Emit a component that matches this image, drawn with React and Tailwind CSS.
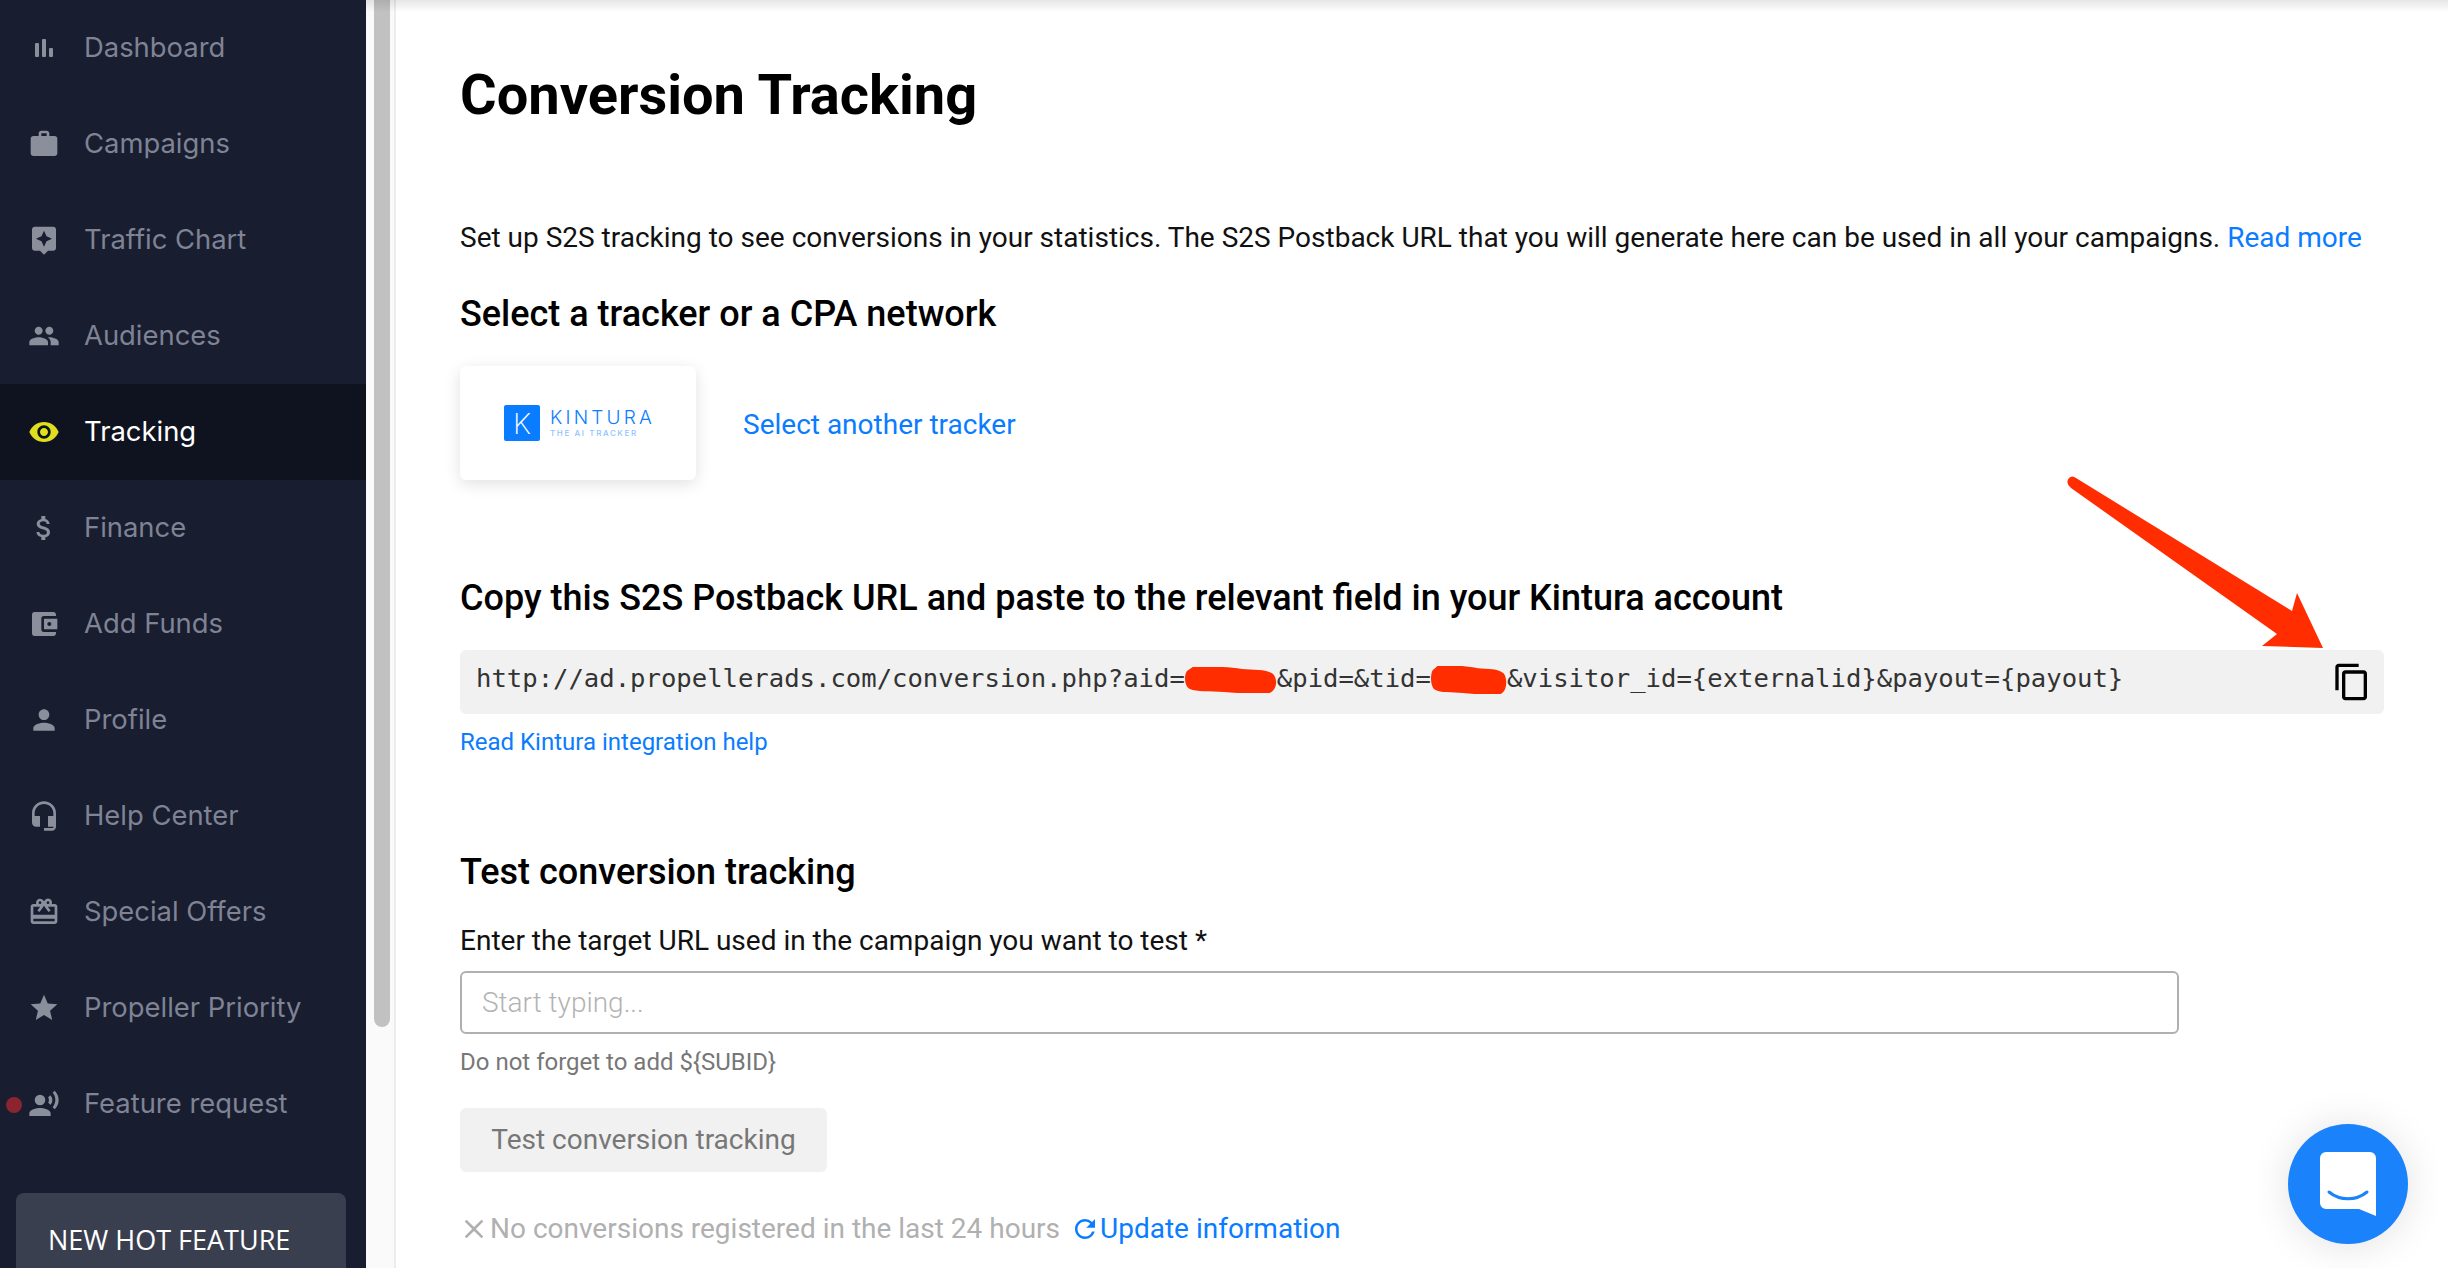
import React from "react";
import {
  MdWork,
  MdAssistant,
  MdPeople,
  MdVisibility,
  MdAttachMoney,
  MdAccountBalanceWallet,
  MdPerson,
  MdHeadsetMic,
  MdOutlineRedeem,
  MdStar,
  MdRecordVoiceOver,
  MdContentCopy,
  MdClose,
  MdRefresh,
} from "react-icons/md";

function BarsIcon({ className }) {
  return (
    <svg className={className} viewBox="0 0 32 32" fill="currentColor">
      <rect x="7" y="11" width="4" height="14" rx="1" />
      <rect x="14" y="7" width="4" height="18" rx="1" />
      <rect x="21" y="16" width="4" height="9" rx="1" />
    </svg>
  );
}

const navItems = [
  { label: "Dashboard", icon: BarsIcon },
  { label: "Campaigns", icon: MdWork },
  { label: "Traffic Chart", icon: MdAssistant },
  { label: "Audiences", icon: MdPeople },
  { label: "Tracking", icon: MdVisibility, active: true },
  { label: "Finance", icon: MdAttachMoney },
  { label: "Add Funds", icon: MdAccountBalanceWallet },
  { label: "Profile", icon: MdPerson },
  { label: "Help Center", icon: MdHeadsetMic },
  { label: "Special Offers", icon: MdOutlineRedeem },
  { label: "Propeller Priority", icon: MdStar },
  { label: "Feature request", icon: MdRecordVoiceOver, dot: true },
];

function NavItem({ label, icon: Icon, active, dot }) {
  return (
    <div
      className={`relative flex h-[96px] shrink-0 items-center pl-[84px] text-[27.4px] ${
        active ? "bg-[#0f131f] text-white" : "text-[#7f8393]"
      }`}
    >
      {dot && (
        <span className="absolute left-[6px] top-[41px] h-[16px] w-[16px] rounded-full bg-[#8c2430]" />
      )}
      <Icon
        className={`absolute left-[28px] top-[32px] h-[32px] w-[32px] ${
          active ? "text-[#dfdf1f]" : "text-[#8b8e9b]"
        }`}
      />
      {label}
    </div>
  );
}

function Sidebar() {
  return (
    <aside className="flex h-full w-[366px] shrink-0 flex-col bg-[#181d30] font-['Inter',sans-serif]">
      {navItems.map((item) => (
        <NavItem key={item.label} {...item} />
      ))}
      <div className="ml-[16px] mr-[20px] mt-[41px] h-[100px] shrink-0 rounded-t-[8px] bg-[#3a3f50] pl-[32px] pt-[29px] font-['Open_Sans',sans-serif] text-[27px] font-medium leading-[36px] text-white">
        NEW HOT FEATURE
      </div>
    </aside>
  );
}

function Scrollbar() {
  return (
    <div className="h-full w-[30px] shrink-0 border-r-2 border-[#ececec] bg-[#fafafa] pl-[8px]">
      <div className="h-[1027px] w-[16px] rounded-b-[8px] bg-[#c1c1c1]" />
    </div>
  );
}

function KinturaLogo() {
  return (
    <div className="flex h-[114px] w-[236px] items-center gap-[10px] rounded-[6px] bg-white pl-[44px] shadow-[0_4px_16px_rgba(0,0,0,0.12)]">
      <div className="flex h-[36px] w-[36px] items-center justify-center rounded-[2px] bg-[#0a7cff] font-['Inter',sans-serif] text-[29px] font-extralight leading-none text-white">
        K
      </div>
      <div className="font-['Inter',sans-serif]">
        <div className="text-[19px] font-light leading-[20px] tracking-[3.2px] text-[#0a7cff]">
          KINTURA
        </div>
        <div className="text-[8px] font-medium leading-[10px] tracking-[1.6px] text-[#8fc3ff]">
          THE AI TRACKER
        </div>
      </div>
    </div>
  );
}

function RedArrow() {
  return (
    <svg
      className="pointer-events-none absolute left-0 top-0"
      width="2448"
      height="1268"
      viewBox="0 0 2448 1268"
    >
      <path
        d="M2076 478 L2292 611 L2297 593 L2323 648 L2262 646 L2277 634 L2071 488 Q2065 483 2069 478 Q2072 475 2076 478 Z"
        fill="#ff2d00"
      />
    </svg>
  );
}

// hand-drawn redaction scribble over the ids in the url
function Scribble({ width, height }) {
  return (
    <svg
      className="inline-block align-middle"
      width={width}
      height={height}
      viewBox="0 0 94 26"
      preserveAspectRatio="none"
    >
      <path
        d="M8 0C28 -1 45 0 58 2C70 3 84 2 90 7C95 12 94 24 86 26C70 27 50 26 40 25C25 24 12 25 5 22C-1 19 -1 8 2 4Z"
        fill="#ff2d00"
      />
    </svg>
  );
}

function Launcher() {
  return (
    <div className="absolute left-[2288px] top-[1124px] flex h-[120px] w-[120px] items-center justify-center rounded-full bg-[#1a82fb] shadow-[0_2px_40px_rgba(0,0,0,0.12)]">
      <svg width="56" height="64" viewBox="0 0 56 64">
        <path
          d="M6 0H50A6 6 0 0 1 56 6V64L39 57H6A6 6 0 0 1 0 51V6A6 6 0 0 1 6 0Z"
          fill="#fff"
        />
        <path
          d="M9 40C20 49 36 49 47 40"
          fill="none"
          stroke="#1a82fb"
          strokeWidth="3"
          strokeLinecap="round"
        />
      </svg>
    </div>
  );
}

export default function App() {
  return (
    <div className="relative flex h-[1268px] w-[2448px] overflow-hidden bg-white font-['Roboto',sans-serif]">
      <Sidebar />
      <Scrollbar />

      <main className="min-w-0 flex-1 px-[64px]">
        <h1 className="mt-[63px] text-[56px] font-bold leading-[64px] text-black">
          Conversion Tracking
        </h1>

        <p className="mt-[95px] whitespace-nowrap text-[28px] leading-[32px] text-[#111]">
          Set up S2S tracking to see conversions in your statistics. The S2S
          Postback URL that you will generate here can be used in all your
          campaigns. <span className="text-[#0a7cff]">Read more</span>
        </p>

        <h2 className="mt-[38px] text-[36px] font-medium leading-[44px] text-black">
          Select a tracker or a CPA network
        </h2>

        <div className="mt-[30px] flex items-center gap-[47px]">
          <KinturaLogo />
          <span className="pt-[4px] text-[28px] text-[#0a7cff]">
            Select another tracker
          </span>
        </div>

        <h2 className="mt-[96px] text-[36px] font-medium leading-[44px] text-black">
          Copy this S2S Postback URL and paste to the relevant field in your
          Kintura account
        </h2>

        <div className="mt-[30px] flex h-[64px] items-center justify-between rounded-[6px] bg-[#f1f1f1] pl-[16px] pr-[12px]">
          <span className="whitespace-nowrap pb-[7px] font-['DejaVu_Sans_Mono',monospace] text-[25.6px] text-[#333]">
            http://ad.propellerads.com/conversion.php?aid=
            <Scribble width={92} height={26} />
            &amp;pid=&amp;tid=
            <Scribble width={76} height={28} />
            &amp;visitor_id={"{externalid}"}&amp;payout={"{payout}"}
          </span>
          <MdContentCopy className="h-[40px] w-[40px] text-black" />
        </div>

        <div className="mt-[14px] text-[24px] leading-[28px] text-[#0a7cff]">
          Read Kintura integration help
        </div>

        <h2 className="mt-[94px] text-[36px] font-medium leading-[44px] text-black">
          Test conversion tracking
        </h2>

        <label className="mt-[31px] block text-[28px] leading-[32px] text-[#111]">
          Enter the target URL used in the campaign you want to test *
        </label>

        <div className="mt-[14px] flex h-[63px] w-[1719px] items-center rounded-[6px] border-2 border-[#b0b0b0] pl-[20px] text-[28px] font-light text-[#b3b3b3]">
          Start typing...
        </div>

        <div className="mt-[14px] text-[24px] leading-[28px] text-[#777]">
          Do not forget to add ${"{SUBID}"}
        </div>

        <div className="mt-[32px] flex h-[64px] w-[367px] items-center justify-center rounded-[6px] bg-[#f1f1f1] text-[28px] text-[#777]">
          Test conversion tracking
        </div>

        <div className="mt-[41px] flex items-center whitespace-nowrap text-[28px] leading-[32px] text-[#b0b0b0]">
          <MdClose className="-ml-[2px] h-[32px] w-[32px]" />
          <span>No conversions registered in the last 24 hours</span>
          <span className="ml-[10px] flex items-center text-[#0a7cff]">
            <MdRefresh className="h-[30px] w-[30px]" />
            Update information
          </span>
        </div>
      </main>

      {/* top bar shadow */}
      <div className="pointer-events-none absolute left-[366px] right-0 top-0 h-[12px] bg-gradient-to-b from-black/10 to-transparent" />
      <RedArrow />
      <Launcher />
    </div>
  );
}
